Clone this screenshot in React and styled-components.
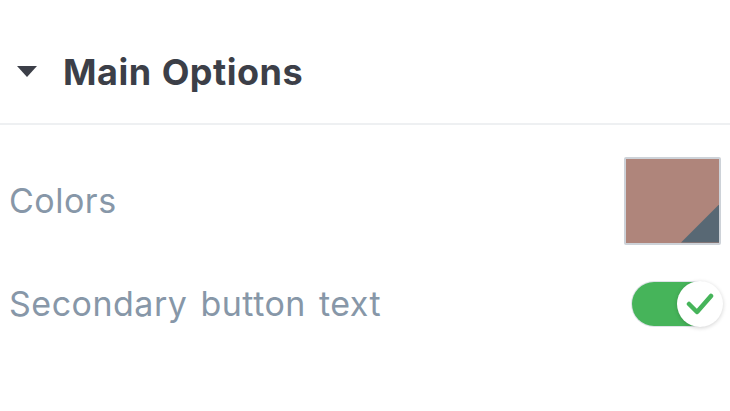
import React from "react";
import styled, { createGlobalStyle } from "styled-components";

const Global = createGlobalStyle`
  html, body { margin: 0; padding: 0; background: #ffffff; }
  body { font-family: "Inter", "Open Sans", sans-serif; }
`;

const Panel = styled.div`
  width: 730px;
  height: 411px;
  background: #ffffff;
  overflow: hidden;
`;

const Header = styled.div`
  display: flex;
  align-items: center;
  gap: 26px;
  box-sizing: border-box;
  height: 125px;
  padding: 20px 0 0 17px;
  border-bottom: 2px solid #eef0f2;
`;

const Caret = styled.svg`
  width: 20px;
  height: 12px;
  flex: none;
`;

const Title = styled.h2`
  margin: 0;
  font-family: "Inter", sans-serif;
  font-weight: 700;
  font-size: 36px;
  letter-spacing: 0.5px;
  word-spacing: 1px;
  color: #3c3f48;
`;

const List = styled.div`
  display: flex;
  flex-direction: column;
  padding: 24px 9px 0 9px;
`;

const Row = styled.div`
  display: flex;
  align-items: center;
  justify-content: space-between;
  height: 103px;
`;

const Label = styled.span`
  font-family: "Inter", sans-serif;
  font-size: 34px;
  font-weight: 400;
  letter-spacing: 0.5px;
  word-spacing: 3px;
  color: #8797a8;
`;

const Swatch = styled.div`
  position: relative;
  width: 93px;
  height: 84px;
  border: 2px solid #cdd2d8;
  border-radius: 2px;
  background: ${(p) => p.$color};
  overflow: hidden;
`;

const Corner = styled.div`
  position: absolute;
  right: 0;
  bottom: 0;
  width: 38px;
  height: 38px;
  background: ${(p) => p.$color};
  clip-path: polygon(100% 0, 100% 100%, 0 100%);
`;

const Toggle = styled.div`
  position: relative;
  width: 88px;
  height: 44px;
  margin-right: 1px;
  border-radius: 22px;
  background: #46b45a;
  box-shadow: 0 0 0 1px #dfe3e8;
`;

const Knob = styled.div`
  position: absolute;
  top: -1px;
  right: -3px;
  width: 46px;
  height: 46px;
  border-radius: 50%;
  background: #ffffff;
  box-shadow: 0 1px 4px rgba(0, 0, 0, 0.18);
  display: flex;
  align-items: center;
  justify-content: center;
`;

export default function App() {
  return (
    <Panel>
      <Global />
      <Header>
        <Caret viewBox="0 0 20 12">
          <polygon points="0,0 20,0 10,11" fill="#3c3f48" />
        </Caret>
        <Title>Main Options</Title>
      </Header>
      <List>
        <Row>
          <Label>Colors</Label>
          <Swatch $color="#af857b">
            <Corner $color="#586874" />
          </Swatch>
        </Row>
        <Row>
          <Label>Secondary button text</Label>
          <Toggle>
            <Knob>
              <svg width="28" height="22" viewBox="0 0 28 22">
                <polyline
                  points="3,11 11,19 25,3"
                  fill="none"
                  stroke="#46b45a"
                  strokeWidth="4.5"
                  strokeLinecap="round"
                  strokeLinejoin="round"
                />
              </svg>
            </Knob>
          </Toggle>
        </Row>
      </List>
    </Panel>
  );
}
